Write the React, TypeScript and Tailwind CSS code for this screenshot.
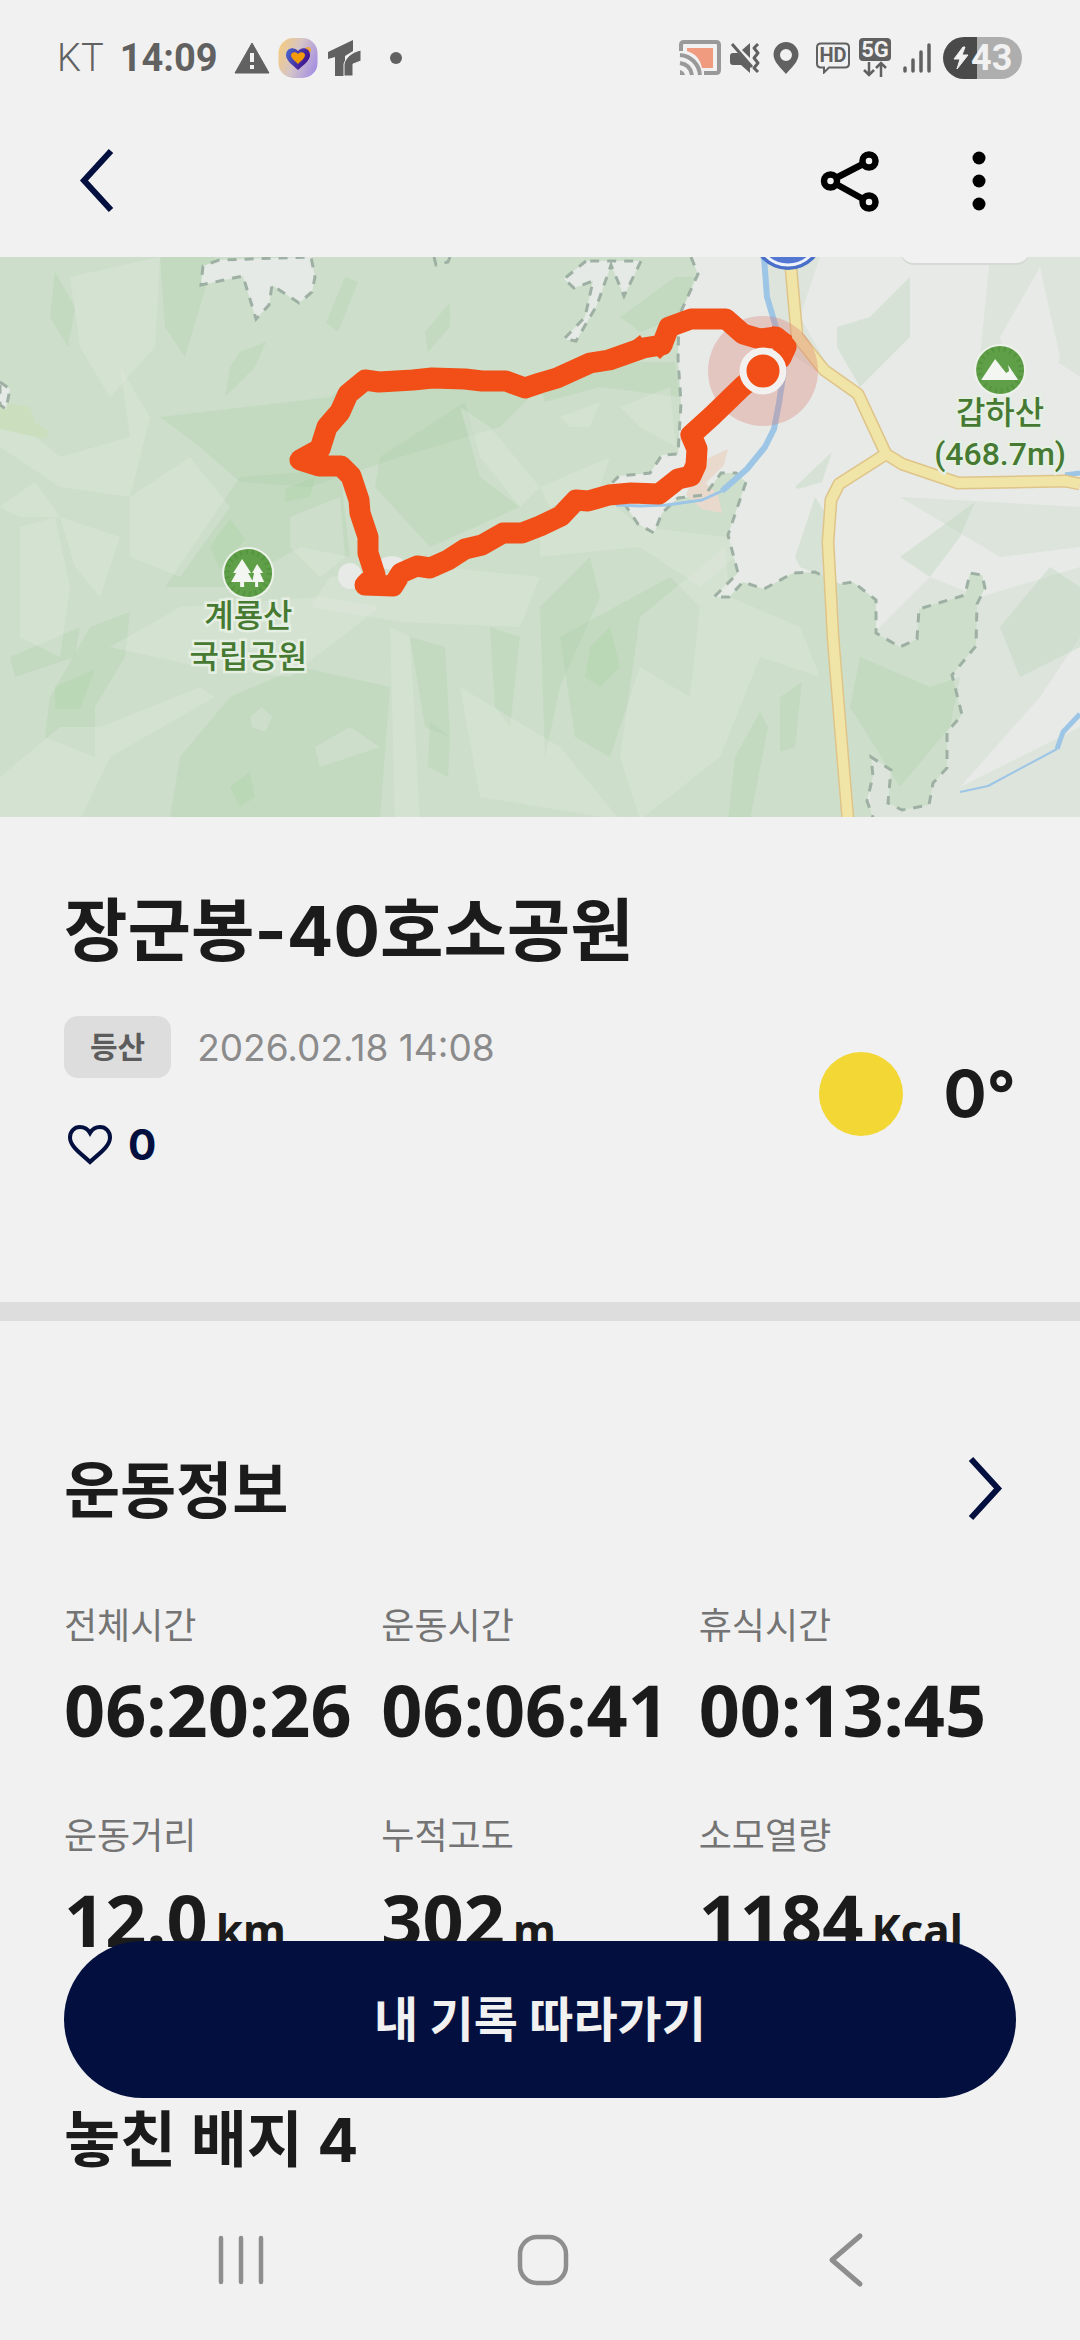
import React from 'react';

const stats = [
  { label: '전체시간', value: '06:20:26', unit: '' },
  { label: '운동시간', value: '06:06:41', unit: '' },
  { label: '휴식시간', value: '00:13:45', unit: '' },
  { label: '운동거리', value: '12.0', unit: 'km' },
  { label: '누적고도', value: '302', unit: 'm' },
  { label: '소모열량', value: '1184', unit: 'Kcal' },
];

function StatusBar() {
  return (
    <div className="flex h-[116px] items-center justify-between pr-[58px] pl-[57px] text-[#616161]">
      <div className="flex items-center font-[Roboto,sans-serif] text-[38px] leading-none">
        <span className="font-light">KT</span>
        <span className="ml-4 font-bold">14:09</span>
        <svg className="ml-4 h-8 w-9" viewBox="0 0 36 32" aria-hidden="true">
          <path d="M18 1 35 31H1z" fill="currentColor" stroke="currentColor" strokeWidth="1" strokeLinejoin="round" />
          <path d="M16 11h4v9h-4zM16 23h4v4h-4z" fill="#f1f1f1" />
        </svg>
        <svg className="ml-2 size-10" viewBox="0 0 40 40" aria-hidden="true">
          <defs>
            <linearGradient id="appbg" x1="0" y1="0.3" x2="1" y2="0.7">
              <stop offset="0" stopColor="#f3cb83" />
              <stop offset="0.45" stopColor="#d5c4c8" />
              <stop offset="1" stopColor="#a48fe2" />
            </linearGradient>
            <linearGradient id="appheart" x1="0" y1="0" x2="1" y2="0.4">
              <stop offset="0" stopColor="#4a6ad0" />
              <stop offset="1" stopColor="#43108c" />
            </linearGradient>
          </defs>
          <rect x="0.5" y="0" width="39" height="40" rx="15" fill="url(#appbg)" />
          <circle cx="30" cy="12" r="3" fill="#eda43c" />
          <path d="M20 32C13 26 8 22 8 17c0-7 8-9 12-4 4-5 12-3 12 4 0 5-5 9-12 15z" fill="url(#appheart)" />
          <path d="M20 26c-4-4-7-6-7-9 0-3 5-4 7-1 2-3 7-2 7 1 0 3-3 5-7 9z" fill="#f39a08" />
        </svg>
        <svg className="ml-2 h-9 w-9" viewBox="0 0 36 36" aria-hidden="true">
          <path d="M2 12 27 0v11l-8 5v20H9V17l-7 2z" fill="currentColor" />
          <path d="M18 36V24c2-7 8-12 17-14v11l-8 3v12z" fill="currentColor" stroke="#f1f1f1" strokeWidth="1" />
        </svg>
        <span className="ml-7 size-3 rounded-full bg-[#616161]" />
      </div>

      <div className="flex items-center">
        <svg className="h-9 w-[42px]" viewBox="0 0 42 36" fill="none" aria-hidden="true">
          <path d="M2 11V5q0-3 3-3h32q3 0 3 3v25q0 3-3 3H25" stroke="#999" strokeWidth="4" />
          <path d="M8 8h26v20H23C21 19 17 14 8 11z" fill="#f09a80" />
          <path d="M1 15c11 1 19 9 20 20M1 23c7 1 11 5 12 12" stroke="#999" strokeWidth="4" />
          <path d="M1 30q4 1 5 5H1z" fill="#999" />
        </svg>
        <svg className="ml-2 h-8 w-8" viewBox="0 0 32 32" fill="none" aria-hidden="true">
          <path d="M4 11h5l12 13v7l-9-8H4q-3 0-3-3v-6q0-3 3-3zM13 8l8-7v15z" fill="currentColor" />
          <path d="m3 2 20 23" stroke="currentColor" strokeWidth="3" />
          <path d="m29 2-4 4 4 5-4 5 4 5-4 5 4 4" stroke="currentColor" strokeWidth="3" strokeLinejoin="round" />
        </svg>
        <svg className="ml-3 h-8 w-[26px]" viewBox="0 0 26 32" aria-hidden="true">
          <path d="M13 0a12.500 12.500 0 0 1 12.500 12.500C25.500 20 18 26 13 32 8 26 .5 20 .5 12.500A12.500 12.500 0 0 1 13 0zm0 7a6 6 0 1 0 0 12 6 6 0 0 0 0-12z" fill="currentColor" />
        </svg>
        <div className="relative ml-4 flex h-8 w-9 justify-center">
          <svg className="absolute inset-0" viewBox="0 0 36 32" fill="none" aria-hidden="true">
            <path d="M6 1.500h24q4 0 4 4v16q0 4-4 4H14l-5 5v-5H6q-4 0-4-4v-16q0-4 4-4z" stroke="currentColor" strokeWidth="2" />
          </svg>
          <span className="font-[Roboto,sans-serif] text-[20px] leading-[27px] font-bold">HD</span>
        </div>
        <div className="ml-2 flex h-10 w-8 flex-col items-center">
          <span className="flex h-[23px] w-full items-center justify-center rounded bg-[#616161] font-[Roboto,sans-serif] text-[22px] leading-none font-bold text-[#f1f1f1]">5G</span>
          <svg className="h-4 w-6" viewBox="0 0 24 16" fill="none" stroke="currentColor" strokeWidth="2.500" aria-hidden="true">
            <path d="M6 1v13M1 9l5 5 5-5M18 16V3M13 7l5-5 5 5" />
          </svg>
        </div>
        <svg className="ml-3 h-8 w-7" viewBox="0 0 28 32" stroke="currentColor" strokeWidth="3.500" strokeLinecap="round" aria-hidden="true">
          <path d="M2 26v3M10 18v11M18 10v19M26 3v26" />
        </svg>
        <div className="ml-3 flex h-[42px] w-[79px] items-center overflow-hidden rounded-full bg-[linear-gradient(90deg,#4a4a4a_43%,#aeaeae_43%)] pl-2 text-[#f1f1f1]">
          <svg className="h-6 w-5" viewBox="0 0 20 24" fill="currentColor" aria-hidden="true">
            <path d="M12 1 3 13h6L6 23 17 9h-6l3-8z" stroke="currentColor" strokeWidth="1" strokeLinejoin="round" />
          </svg>
          <span className="font-[Roboto,sans-serif] text-[36px] leading-none font-bold">43</span>
        </div>
      </div>
    </div>
  );
}

function AppHeader() {
  return (
    <header className="flex h-[141px] items-start justify-between pt-7 pr-[74px] pl-[60px]">
      <button type="button" aria-label="뒤로" className="flex size-[72px] items-center justify-center">
        <svg className="h-16 w-9" viewBox="0 0 36 64" fill="none">
          <path d="M33 3 6 32.500 33 62" stroke="#03103f" strokeWidth="6" />
        </svg>
      </button>
      <div className="flex items-center gap-[72px]">
        <button type="button" aria-label="공유" className="flex h-[72px] w-[60px] items-center justify-center">
          <svg className="h-16 w-[60px]" viewBox="0 0 60 64" fill="none" stroke="#000" strokeWidth="6.500">
            <circle cx="10.500" cy="33" r="6.500" />
            <circle cx="49" cy="13" r="6.500" />
            <circle cx="49" cy="54" r="6.500" />
            <path d="m16 30 27-14M16 36l27 15" />
          </svg>
        </button>
        <button type="button" aria-label="더보기" className="flex h-[72px] w-[54px] items-center justify-center">
          <svg className="h-16 w-4" viewBox="0 0 16 64">
            <circle cx="8" cy="10" r="6.500" />
            <circle cx="8" cy="33" r="6.500" />
            <circle cx="8" cy="56" r="6.500" />
          </svg>
        </button>
      </div>
    </header>
  );
}

const parkEdge =
  'M691 0 698 17 679 59 678 102 681 146 678 197 662 198 650 216 619 219 611 227 638 267 654 276 662 256 678 241 705 238 721 216 736 216 746 225 728 278 738 316 714 340 729 340 743 325 764 332 793 316 815 315 840 327 853 325 876 343 876 376 900 390 917 382 919 352 965 338 970 316 982 318 985 331 977 347 976 389 952 418 962 458 947 475 947 511 933 526 929 548 902 553 888 546 891 513 871 500 873 519 867 544 874 563';

const route =
  'M781 101 786 90 776 80 760 82 743 77 726 62 691 62 669 70 662 88 643 91 609 103 590 106 557 121 540 126 525 131 506 124 482 124 465 122 432 121 413 123 379 125 365 123 348 137 340 155 327 170 320 192 300 203 319 209 341 209 351 219 359 243 360 256 368 280 368 296 375 318 365 328 393 329 401 316 417 309 430 311 448 303 465 292 482 288 503 276 522 276 540 269 561 259 576 243 588 244 609 238 631 236 659 237 678 222 691 219 696 208 697 192 691 178 712 159 743 129 763 114';

const roads =
  'M790 0 797 79 824 113 858 137 886 197 902 207 958 226 1065 224 1080 227M886 197 839 227 831 243 828 285 833 380 843 504 848 563';

const townGaps = [
  'M219 3 203 9 201 28 243 19 256 62 269 48 272 28 299 46 312 35 315 20 311 0z',
  'M0 125 10 132 6 152 0 148z',
  'M586 4 564 22 574 31 593 24 585 60 564 82 576 84 597 48 611 8 624 39 641 4z',
];

// hill shading, darker slopes first
const darkSlopes = [
  'M160 0 215 0 200 50 185 100 165 70z',
  'M55 15 75 50 68 90 50 60z',
  'M345 20 358 25 338 75 326 66z',
  'M450 45 450 70 428 95 425 75z',
  'M240 95 266 85 255 110 225 140 230 110z',
  'M160 160 330 140 350 125 540 130 500 170 400 200 310 230 240 225 200 190z',
  'M380 200 465 145 480 200 520 250 430 290 375 230z',
  'M240 220 340 212 350 300 300 290 230 330 165 330z',
  'M90 370 130 355 125 400 95 450 95 500 45 480 50 440z',
  'M10 400 80 370 75 400 15 420z',
  'M230 440 300 410 390 430 380 560 170 560 180 500z',
  'M410 380 445 390 450 480 425 470z',
  'M490 370 520 380 510 470 495 450z',
  'M430 465 450 480 448 520 428 510z',
  'M560 380 670 320 700 350 690 440 640 410 610 500 575 480z',
  'M540 350 590 300 600 340 560 430 545 500z',
  'M735 500 760 455 768 470 750 563 728 563z',
  'M780 440 802 425 795 490 780 495z',
  'M540 130 610 105 675 105 680 140 600 130 545 145z',
  'M620 60 675 20 695 20 680 60 640 75z',
  'M860 400 930 430 960 420 950 470 900 530 850 450z',
  'M837 70 870 60 910 20 910 80 860 130 837 90z',
  'M795 230 832 195 822 225 798 232z',
  'M795 300 815 240 828 260 825 320 800 310z',
  'M900 300 975 245 960 280 930 320z',
  'M1000 370 1050 310 1080 330 1080 390 1020 420z',
];

const lightSlopes = [
  'M70 20 160 0 155 90 110 140 80 90z',
  'M0 150 60 200 130 180 120 110 150 160 130 240 60 230 0 190z',
  'M0 250 35 225 60 260 20 260z',
  'M20 270 55 260 70 330 60 400 20 380z',
  'M130 240 190 200 230 250 180 320 130 300z',
  'M60 260 120 280 100 340 75 310z',
  'M290 260 340 240 345 300 320 320 290 290z',
  'M110 390 180 350 320 340 380 350 290 420 200 410z',
  'M0 520 60 470 100 470 200 430 215 440 110 500 80 563 0 563z',
  'M460 150 490 170 540 230 520 250 480 220z',
  'M330 320 440 310 540 320 520 370 400 365 310 350z',
  'M250 460 262 450 272 460 265 475 252 470z',
  'M315 490 350 470 380 490 320 510z',
  'M390 370 410 380 420 563 395 563z',
  'M460 430 560 490 620 563 480 540z',
  'M640 360 725 290 730 340 800 370 820 420 760 400 720 500 640 563 620 500z',
  'M560 160 600 145 590 170 570 170z',
  'M620 150 670 130 676 190 640 170z',
  'M540 230 610 200 600 230 550 250z',
  'M540 272 610 245 640 270 728 280 735 300 700 330 640 290 540 300z',
];

function MapPin({ children, lines, className }: { children: React.ReactNode; lines: string[]; className: string }) {
  return (
    <div className={`absolute flex -translate-x-1/2 flex-col items-center ${className}`}>
      <svg className="-mb-1 size-[54px]" viewBox="0 0 54 54">
        <circle cx="27" cy="27" r="26" fill="#edf3ea" />
        <circle cx="27" cy="27" r="24" fill="#5f9f48" />
        <circle cx="27" cy="27" r="21" fill="none" stroke="#4d8b38" strokeWidth="5" strokeDasharray="2 4" opacity="0.5" />
        {children}
      </svg>
      {lines.map(line => (
        <span
          key={line}
          className="font-[Roboto,'Noto_Sans_CJK_KR',sans-serif] text-[32px] leading-[41px] font-medium whitespace-nowrap text-[#467a32] [paint-order:stroke_fill] [-webkit-text-stroke:5px_#e6efe3]"
        >
          {line}
        </span>
      ))}
    </div>
  );
}

function RouteMap() {
  return (
    <section aria-label="지도" className="relative overflow-hidden bg-[#e7eae7]">
      <svg className="block w-full" viewBox="0 0 1080 560" fill="none">
        <path d="M760 0h60l-20 60 40 70-60-40zM990 0h90v120l-60-40-40 20z" fill="#dde4dc" />
        <path d="M1080 290 1000 300 900 240 1080 250zM870 380l60-60 50 20 100-30v253H870z" fill="#dde4dc" />
        <path d="m1080 380-40 60-80 90 120-60zM1000 80l40-70 20 90-30 90zM950 60l30-40-5 60-35 20z" fill="#e7eae7" />
        <path d={`M0 0H691L${parkEdge.slice(1)}H0z`} fill="#cddfca" />
        <g fill="#a9cda6" fillOpacity="0.25">
          {darkSlopes.map(d => <path key={d} d={d} />)}
        </g>
        <g fill="#e2e9df" fillOpacity="0.32">
          {lightSlopes.map(d => <path key={d} d={d} />)}
        </g>
        <path
          d="m285 232 30-12-5 20-25 5zM210 290l20-28 15 20-25 30zM55 430l40-18-15 40-25 0zM590 390l20-20 10 40-20 20-15-10zM230 530l20-15 5 25-15 10z"
          fill="#9fce97"
          fillOpacity="0.25"
        />
        <path d="M0 145 30 150 35 165 50 175 45 182 0 172z" fill="#cbdfbf" />
        <path d="m700 205 28-13-4 16-18 18 12 12 4 18-20-4-16-14z" fill="#e8d9cc" />
        <ellipse cx="350" cy="319" rx="12" ry="13" fill="#e7eae7" />
        <ellipse cx="392" cy="306" rx="12" ry="7" fill="#e7eae7" />
        {townGaps.map(d => <path key={d} d={d} fill="#e6eae6" />)}
        <g stroke="#9db0a3" strokeWidth="3" strokeDasharray="9 8">
          {townGaps.map(d => <path key={d} d={d} />)}
          <path d="m434 0 2 8 12-3 2-5" />
          <path d={parkEdge} />
        </g>

        <g stroke="#9cc5e6" strokeLinejoin="round">
          <path d="M764 0 767 40 778 77 784 113 779 146 774 172 765 190 747 212 722 234" strokeWidth="6" />
          <path d="m722 234-20 9-35 5-27 1-24-1" strokeWidth="3" />
          <path d="m1080 457-17 18-6 17" strokeWidth="5" />
          <path d="m1057 492-69 37-28 6" strokeWidth="2" />
          <path d="m1065 218 15-2" strokeWidth="5" />
        </g>

        <g strokeLinejoin="round">
          <path d={roads} stroke="#dfc48a" strokeWidth="13" />
          <path d={roads} stroke="#f0e4a7" strokeWidth="10" />
        </g>

        <circle cx="788" cy="-23" r="36" fill="#4a6fc8" />
        <circle cx="788" cy="-23" r="31" fill="#5276d2" stroke="#eef2fb" strokeWidth="3" />
        <rect x="900" y="-60" width="130" height="68" rx="14" fill="#d5dad5" />
        <rect x="900" y="-60" width="130" height="66" rx="14" fill="#f1f1f1" />

        <circle cx="763" cy="114" r="55" fill="#de7a70" fillOpacity="0.32" />
        <path d={route} stroke="#f14f17" strokeWidth="21" strokeLinejoin="round" strokeLinecap="round" />
        <path d="m772 69 10 3 10 7-2 22-8 5zM650 92l10 10 4-4 9-8zM640 78l4 6-14 2z" fill="#f14f17" />
        <circle cx="763" cy="114" r="20" fill="#f14f17" stroke="#f3f1ef" strokeWidth="7" />
      </svg>

      <MapPin className="top-[289px] left-[23%]" lines={['계룡산', '국립공원']}>
        <path d="m21 13-9 14h3l-5 9h9v5h4v-5h9l-5-9h3zM36 18l-5 9h2l-2 9h3v5h3v-5h6l-4-9h3z" fill="#f3f6f1" />
      </MapPin>
      <MapPin className="top-[86px] left-[92.6%]" lines={['갑하산', '(468.7m)']}>
        <path d="m8 37 14-21 11 14 3-2-1-6 10 15z" fill="#f3f6f1" />
      </MapPin>
    </section>
  );
}

function Summary() {
  return (
    <section className="flex justify-between border-b-[19px] border-[#ddd] px-16 pt-[68px] pb-[126px]">
      <div>
        <h1 className="text-[69px] leading-[92px] font-bold whitespace-nowrap">장군봉-40호소공원</h1>
        <div className="mt-[39px] flex items-center gap-[26px]">
          <span className="flex h-[62px] items-center rounded-[14px] bg-[#ddd] px-[26px] text-[30px] leading-none font-bold text-[#5c5c5c]">등산</span>
          <time className="text-[37px] leading-none text-[#8b8b8b]">2026.02.18 14:08</time>
        </div>
        <button type="button" aria-label="좋아요" className="mt-9 flex h-[62px] items-center gap-4 pl-1 text-[42px] leading-none font-bold text-[#03103f]">
          <svg className="h-10 w-11" viewBox="0 0 44 40" fill="none">
            <path d="M22 37C15 30 2 22 2 12.500 2 6 6.500 2 12 2c5 0 8 2.500 10 6 2-3.500 5-6 10-6 5.500 0 10 4 10 10.500C42 22 29 30 22 37z" stroke="currentColor" strokeWidth="4" />
          </svg>
          0
        </button>
      </div>
      <div className="mb-10 flex h-[84px] items-center gap-10 self-end">
        <span className="size-[84px] rounded-full bg-[#f2d735]" />
        <span className="text-[64px] leading-none font-bold">0°</span>
      </div>
    </section>
  );
}

function Workout() {
  return (
    <section className="px-16 pt-[130px]">
      <div className="flex items-center justify-between">
        <h2 className="text-[61px] leading-[80px] font-bold">운동정보</h2>
        <button type="button" aria-label="운동정보 더보기" className="pr-3">
          <svg className="h-16 w-9 overflow-visible" viewBox="0 0 36 64" fill="none">
            <path d="M3 0 30 29.500 3 59" stroke="#03103f" strokeWidth="6" />
          </svg>
        </button>
      </div>
      <dl className="mt-[68px] grid grid-cols-3 gap-y-[52px]">
        {stats.map(s => (
          <div key={s.label} className="flex flex-col">
            <dt className="text-[36px] leading-[54px] text-[#747474]">{s.label}</dt>
            <dd className="mt-2 font-['Noto_Sans',sans-serif] text-[72px] leading-24 font-bold whitespace-nowrap">
              {s.value}
              {s.unit && <span className="ml-2 text-[44px]">{s.unit}</span>}
            </dd>
          </div>
        ))}
      </dl>
      <h2 className="mt-[122px] text-[61px] leading-[80px] font-bold">놓친 배지 4</h2>
    </section>
  );
}

function NavBar() {
  return (
    <nav className="fixed inset-x-0 bottom-0 grid h-[160px] grid-cols-3 items-center justify-items-center bg-[#f1f1f1] pr-[84px] pl-[90px] text-[#8e8e8e]">
      <button type="button" aria-label="최근 앱">
        <svg className="h-14 w-14" viewBox="0 0 56 56" fill="none" stroke="currentColor" strokeWidth="4.500" strokeLinecap="round">
          <path d="M8 6v44M28 6v44M48 6v44" />
        </svg>
      </button>
      <button type="button" aria-label="홈">
        <svg className="h-14 w-14" viewBox="0 0 56 56" fill="none" stroke="currentColor" strokeWidth="4.500">
          <rect x="5" y="5" width="46" height="46" rx="17" />
        </svg>
      </button>
      <button type="button" aria-label="이전">
        <svg className="h-14 w-14" viewBox="0 0 56 56" fill="none" stroke="currentColor" strokeWidth="5" strokeLinecap="round" strokeLinejoin="round">
          <path d="M43 4 15 28l28 24" />
        </svg>
      </button>
    </nav>
  );
}

export default function App() {
  return (
    <div className="min-h-screen bg-[#f1f1f1] pb-[160px] font-[Inter,'Noto_Sans_CJK_KR',sans-serif] text-[#1b1b1b]">
      <StatusBar />
      <AppHeader />
      <main>
        <RouteMap />
        <Summary />
        <Workout />
      </main>
      <div className="fixed inset-x-0 bottom-[242px] px-16">
        <button type="button" className="h-[157px] w-full rounded-full bg-[#03103f] text-[48px] leading-none font-bold text-[#f1f1f1]">
          내 기록 따라가기
        </button>
      </div>
      <NavBar />
    </div>
  );
}
